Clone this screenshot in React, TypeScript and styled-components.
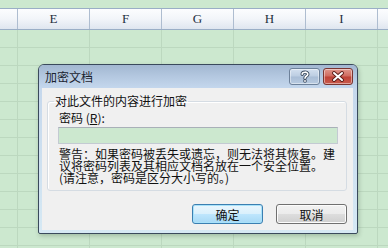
import React from 'react';
import styled, { createGlobalStyle } from 'styled-components';

const GlobalStyle = createGlobalStyle`
  html, body {
    margin: 0;
    padding: 0;
  }
  body {
    width: 388px;
    height: 248px;
    overflow: hidden;
    background: #cce8cf;
    font-family: "Noto Sans CJK SC", "Noto Sans", sans-serif;
  }
`;

const Screen = styled.div`
  position: relative;
  width: 388px;
  height: 248px;
  overflow: hidden;
  background: #cce8cf;
`;

const TopStrip = styled.div`
  height: 8px;
`;

const HeaderRow = styled.div`
  display: flex;
  height: 20px;
  border-top: 1px solid #9aaec6;
  border-bottom: 1px solid #9aaec6;
  background: linear-gradient(#fcfdfe, #f2f5f9 50%, #dfe6ef);
`;

const HeaderCell = styled.div<{ $w: number }>`
  flex: none;
  box-sizing: border-box;
  width: ${(p) => p.$w}px;
  border-right: 1px solid #aebdd0;
  display: flex;
  align-items: center;
  justify-content: center;
  font-family: "Liberation Serif", serif;
  font-size: 13px;
  color: #24303e;
`;

const SheetRow = styled.div`
  display: flex;
  height: 18px;
  box-sizing: border-box;
  border-bottom: 1px solid #bcd8bf;
`;

const Cell = styled.div<{ $w: number }>`
  flex: none;
  box-sizing: border-box;
  width: ${(p) => p.$w}px;
  border-right: 1px solid #bcd8bf;
`;

const Dialog = styled.div`
  position: absolute;
  left: 38px;
  top: 64px;
  width: 320px;
  height: 170px;
  box-sizing: border-box;
  border: 1px solid #3a4a5c;
  border-radius: 6px 6px 2px 2px;
  background: linear-gradient(#c3d5eb, #d6e9f4);
  display: flex;
  flex-direction: column;
  box-shadow: 1px 2px 4px rgba(40, 60, 40, 0.25);
  overflow: hidden;
`;

const TitleBar = styled.div`
  flex: none;
  height: 23px;
  display: flex;
  align-items: flex-start;
  padding: 0 4px 0 6px;
  background: linear-gradient(#a2b7d1, #b4c8e0 50%, #c4d7ed);
`;

const Title = styled.div`
  flex: 1;
  margin-top: 5px;
  font-size: 12px;
  line-height: 14px;
  color: #1b2430;
`;

const TitleButtons = styled.div`
  display: flex;
  gap: 3px;
  margin-top: 3px;
`;

const CaptionButton = styled.div<{ $close?: boolean }>`
  box-sizing: border-box;
  width: ${(p) => (p.$close ? 30 : 31)}px;
  height: 17px;
  border-radius: 3px;
  border: 1px solid ${(p) => (p.$close ? '#7a3530' : '#6d819a')};
  box-shadow: inset 0 0 0 1px rgba(255, 255, 255, 0.45);
  background: ${(p) =>
    p.$close
      ? 'linear-gradient(#e0978c, #d06a5e 48%, #bf4236 52%, #c85a4c)'
      : 'linear-gradient(#d3e0ef, #bccde2 48%, #a9bdd6 52%, #b8cbe1)'};
  display: flex;
  align-items: center;
  justify-content: center;
`;

const Client = styled.div`
  flex: 1;
  margin: 0 4px 3px 3px;
  background: #f0f0f0;
  display: flex;
  flex-direction: column;
  font-size: 12px;
  color: #111;
`;

const Group = styled.fieldset`
  margin: 6px 0 0 5px;
  width: 300px;
  box-sizing: border-box;
  padding: 3px 8px 6px 10px;
  border: 1px solid #d5dce3;
  border-radius: 3px;
  box-shadow: inset 1px 1px 0 #fff;
`;

const Legend = styled.legend`
  margin-left: -4px;
  padding: 0 1px;
  font-size: 12px;
  line-height: 14px;
`;

const FieldLabel = styled.div`
  margin-left: 1px;
  line-height: 14px;
`;

const PasswordInput = styled.div`
  margin-top: 2px;
  width: 280px;
  height: 17px;
  box-sizing: border-box;
  border: 1px solid #c3cad2;
  border-top-color: #a9b0b8;
  background: #cce8cf;
`;

// the three warning lines sit very close together, as in the original dialog
const Warning = styled.div`
  margin: 4px 0 0 1px;
  line-height: 12px;
  white-space: nowrap;
`;

const ButtonRow = styled.div`
  display: flex;
  justify-content: flex-end;
  gap: 13px;
  margin-top: 13px;
  padding-right: 6px;
`;

const Button = styled.div<{ $default?: boolean }>`
  box-sizing: border-box;
  width: 71px;
  height: 20px;
  border-radius: 3px;
  border: 1px solid ${(p) => (p.$default ? '#3c7fb1' : '#707070')};
  box-shadow: inset 0 0 0 1px ${(p) => (p.$default ? '#a8e2fa' : '#fcfcfc')};
  background: ${(p) =>
    p.$default
      ? 'linear-gradient(#eaf6fd, #d9f0fc 50%, #bee6fd 51%, #a7d9f5)'
      : 'linear-gradient(#f2f2f2, #ebebeb 50%, #dddddd 51%, #cfcfcf)'};
  display: flex;
  align-items: center;
  justify-content: center;
  font-size: 12px;
  color: #111;
`;

const HelpIcon = () => (
  <svg width="12" height="13" viewBox="0 0 12 13">
    <path
      d="M3.2 4.2 C3.2 1.6 8.8 1.4 8.8 4.2 C8.8 6 6 6 6 8.2"
      fill="none"
      stroke="#3b4a5e"
      strokeWidth="3.4"
      strokeLinecap="round"
    />
    <circle cx="6" cy="11" r="1.8" fill="#3b4a5e" />
    <path
      d="M3.2 4.2 C3.2 1.6 8.8 1.4 8.8 4.2 C8.8 6 6 6 6 8.2"
      fill="none"
      stroke="#fff"
      strokeWidth="1.6"
      strokeLinecap="round"
    />
    <circle cx="6" cy="11" r="0.9" fill="#fff" />
  </svg>
);

const CloseIcon = () => (
  <svg width="14" height="11" viewBox="0 0 14 11">
    <path d="M3 2 L11 9 M11 2 L3 9" stroke="#5a1e1a" strokeWidth="3.8" strokeLinecap="round" />
    <path d="M3 2 L11 9 M11 2 L3 9" stroke="#fff" strokeWidth="2" strokeLinecap="round" />
  </svg>
);

// the last column is only a sliver at the right edge, so it has no visible letter
const columns = ['', 'E', 'F', 'G', 'H', 'I', ''];
const widths = [18, 72, 72, 72, 72, 72, 72];
const rowCount = 13;

const warningLines = [
  '警告：如果密码被丢失或遗忘，则无法将其恢复。建',
  '议将密码列表及其相应文档名放在一个安全位置。',
  '(请注意，密码是区分大小写的。)',
];

export default function App() {
  return (
    <Screen>
      <GlobalStyle />
      <TopStrip />
      <HeaderRow>
        {columns.map((c, i) => (
          <HeaderCell key={i} $w={widths[i]}>
            {c}
          </HeaderCell>
        ))}
      </HeaderRow>
      {Array.from({ length: rowCount }).map((_, r) => (
        <SheetRow key={r}>
          {widths.map((w, i) => (
            <Cell key={i} $w={w} />
          ))}
        </SheetRow>
      ))}

      <Dialog>
        <TitleBar>
          <Title>加密文档</Title>
          <TitleButtons>
            <CaptionButton>
              <HelpIcon />
            </CaptionButton>
            <CaptionButton $close>
              <CloseIcon />
            </CaptionButton>
          </TitleButtons>
        </TitleBar>
        <Client>
          <Group>
            <Legend>对此文件的内容进行加密</Legend>
            <FieldLabel>
              密码 (<u>R</u>):
            </FieldLabel>
            <PasswordInput />
            <Warning>
              {warningLines.map((l) => (
                <div key={l}>{l}</div>
              ))}
            </Warning>
          </Group>
          <ButtonRow>
            <Button $default>确定</Button>
            <Button>取消</Button>
          </ButtonRow>
        </Client>
      </Dialog>
    </Screen>
  );
}
